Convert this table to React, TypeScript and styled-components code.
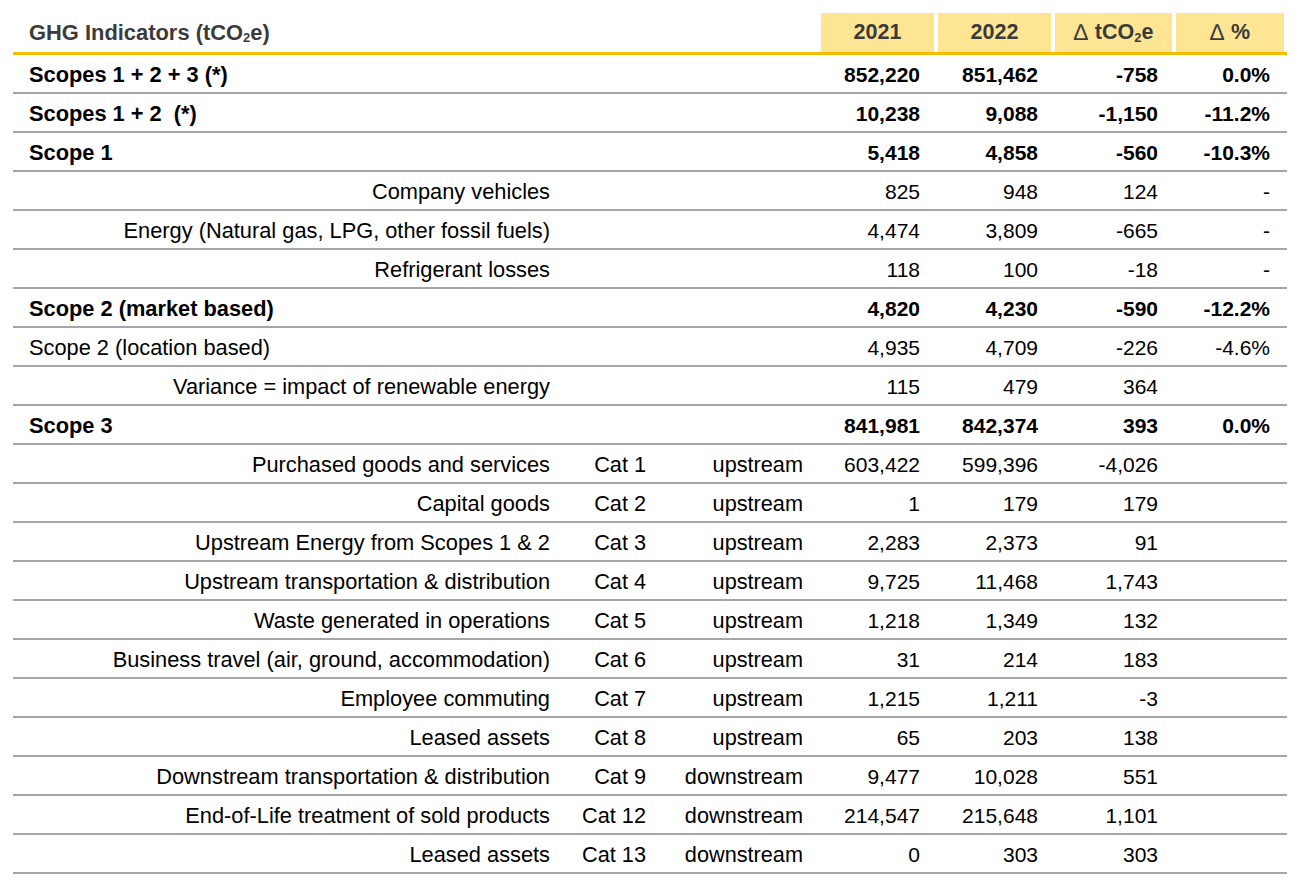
import React from "react";
import styled, { createGlobalStyle } from "styled-components";

const GlobalStyle = createGlobalStyle`
  html, body { margin: 0; padding: 0; background: #ffffff; }
  body { font-family: "Liberation Sans", Arial, Helvetica, sans-serif; }
`;

const Page = styled.div`
  padding: 13px 23px 10px 13px;
  width: 1274px;
`;

const Table = styled.div`
  display: flex;
  flex-direction: column;
`;

const COLS = "550px 83px 163px 113px 113px 117px 108px";

const HeaderRow = styled.div`
  display: grid;
  grid-template-columns: ${COLS};
  column-gap: 4px;
  padding-right: 3px;
  height: 39px;
  border-bottom: 3px solid #f6bd00;
`;

const HeadTitle = styled.div`
  display: flex;
  align-items: center;
  padding-left: 16px;
  font-size: 21.9px;
  font-weight: 700;
  color: #3b3b3b;
  grid-column: 1 / 4;
`;

const HeadCell = styled.div`
  display: flex;
  align-items: center;
  justify-content: center;
  background: #fde594;
  font-size: 21.5px;
  font-weight: 700;
  color: #3b3b3b;
`;

const Delta = styled.span`
  font-weight: 400;
  font-size: 23px;
  margin-right: 7px;
`;

const Sub = styled.span`
  font-size: 13px;
  position: relative;
  top: 5px;
`;

const Row = styled.div<{ $bold?: boolean }>`
  display: grid;
  grid-template-columns: ${COLS};
  column-gap: 4px;
  padding: 2px 3px 0 0;
  height: 35px;
  border-bottom: 2px solid #a6a6a6;
  font-size: 21px;
  color: #000;
  font-weight: ${(p) => (p.$bold ? 700 : 400)};
`;

const Label = styled.div<{ $indent?: boolean }>`
  display: flex;
  align-items: center;
  justify-content: ${(p) => (p.$indent ? "flex-end" : "flex-start")};
  padding: ${(p) => (p.$indent ? "0 13px 0 0" : "0 0 0 16px")};
  font-size: 21.8px;
  white-space: pre;
`;

const Cell = styled.div<{ $pad?: number; $text?: boolean }>`
  display: flex;
  align-items: center;
  justify-content: flex-end;
  padding-right: ${(p) => p.$pad ?? 14}px;
  font-size: ${(p) => (p.$text ? "21.7px" : "21px")};
  white-space: nowrap;
`;

type R = {
  label: string;
  bold?: boolean;
  indent?: boolean;
  cat?: string;
  stream?: string;
  v: [string, string, string, string];
};

const rows: R[] = [
  { label: "Scopes 1 + 2 + 3 (*)", bold: true, v: ["852,220", "851,462", "-758", "0.0%"] },
  { label: "Scopes 1 + 2  (*)", bold: true, v: ["10,238", "9,088", "-1,150", "-11.2%"] },
  { label: "Scope 1", bold: true, v: ["5,418", "4,858", "-560", "-10.3%"] },
  { label: "Company vehicles", indent: true, v: ["825", "948", "124", "-"] },
  { label: "Energy (Natural gas, LPG, other fossil fuels)", indent: true, v: ["4,474", "3,809", "-665", "-"] },
  { label: "Refrigerant losses", indent: true, v: ["118", "100", "-18", "-"] },
  { label: "Scope 2 (market based)", bold: true, v: ["4,820", "4,230", "-590", "-12.2%"] },
  { label: "Scope 2 (location based)", v: ["4,935", "4,709", "-226", "-4.6%"] },
  { label: "Variance = impact of renewable energy", indent: true, v: ["115", "479", "364", ""] },
  { label: "Scope 3", bold: true, v: ["841,981", "842,374", "393", "0.0%"] },
  { label: "Purchased goods and services", indent: true, cat: "Cat 1", stream: "upstream", v: ["603,422", "599,396", "-4,026", ""] },
  { label: "Capital goods", indent: true, cat: "Cat 2", stream: "upstream", v: ["1", "179", "179", ""] },
  { label: "Upstream Energy from Scopes 1 & 2", indent: true, cat: "Cat 3", stream: "upstream", v: ["2,283", "2,373", "91", ""] },
  { label: "Upstream transportation & distribution", indent: true, cat: "Cat 4", stream: "upstream", v: ["9,725", "11,468", "1,743", ""] },
  { label: "Waste generated in operations", indent: true, cat: "Cat 5", stream: "upstream", v: ["1,218", "1,349", "132", ""] },
  { label: "Business travel (air, ground, accommodation)", indent: true, cat: "Cat 6", stream: "upstream", v: ["31", "214", "183", ""] },
  { label: "Employee commuting", indent: true, cat: "Cat 7", stream: "upstream", v: ["1,215", "1,211", "-3", ""] },
  { label: "Leased assets", indent: true, cat: "Cat 8", stream: "upstream", v: ["65", "203", "138", ""] },
  { label: "Downstream transportation & distribution", indent: true, cat: "Cat 9", stream: "downstream", v: ["9,477", "10,028", "551", ""] },
  { label: "End-of-Life treatment of sold products", indent: true, cat: "Cat 12", stream: "downstream", v: ["214,547", "215,648", "1,101", ""] },
  { label: "Leased assets", indent: true, cat: "Cat 13", stream: "downstream", v: ["0", "303", "303", ""] },
];

export default function App() {
  return (
    <Page>
      <GlobalStyle />
      <Table>
        <HeaderRow>
          <HeadTitle>
            GHG Indicators (tCO<Sub>2</Sub>e)
          </HeadTitle>
          <HeadCell>2021</HeadCell>
          <HeadCell>2022</HeadCell>
          <HeadCell>
            <Delta>∆</Delta>tCO<Sub>2</Sub>e
          </HeadCell>
          <HeadCell>
            <Delta>∆</Delta>%
          </HeadCell>
        </HeaderRow>
        {rows.map((r, i) => (
          <Row key={i} $bold={r.bold}>
            <Label $indent={r.indent}>{r.label}</Label>
            <Cell $pad={4} $text>{r.cat ?? ""}</Cell>
            <Cell $pad={14} $text>{r.stream ?? ""}</Cell>
            <Cell $pad={14}>{r.v[0]}</Cell>
            <Cell $pad={13}>{r.v[1]}</Cell>
            <Cell $pad={14}>{r.v[2]}</Cell>
            <Cell $pad={14}>{r.v[3]}</Cell>
          </Row>
        ))}
      </Table>
    </Page>
  );
}
